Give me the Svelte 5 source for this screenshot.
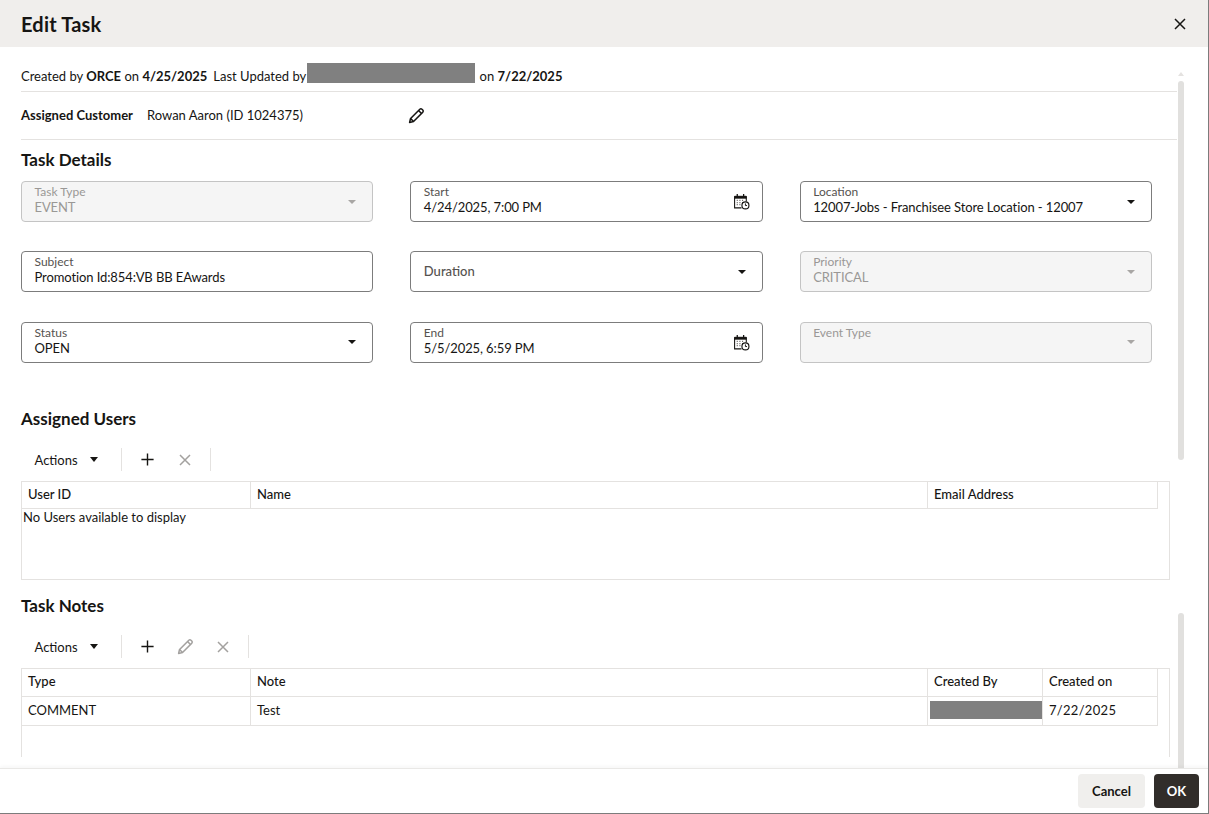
<script>
  const fields = [
    { label: 'Task Type', value: 'EVENT', kind: 'select', disabled: true },
    { label: 'Start', value: '4/24/2025, 7:00\u202fPM', kind: 'date' },
    { label: 'Location', value: '12007-Jobs - Franchisee Store Location - 12007', kind: 'select' },
    { label: 'Subject', value: 'Promotion Id:854:VB BB EAwards', kind: 'text' },
    { label: 'Duration', value: '', kind: 'select' },
    { label: 'Priority', value: 'CRITICAL', kind: 'select', disabled: true },
    { label: 'Status', value: 'OPEN', kind: 'select' },
    { label: 'End', value: '5/5/2025, 6:59\u202fPM', kind: 'date' },
    { label: 'Event Type', value: '', kind: 'select', disabled: true, top: true }
  ]
</script>

{#snippet pencil()}
  <svg class="icon" viewBox="0 0 16 16" fill="none" stroke="currentColor" stroke-width="1.300">
    <path d="M2.200 13.800l.8-3.300L10.800 2.700a1.300 1.300 0 0 1 1.800 0l.7.7a1.300 1.300 0 0 1 0 1.800L5.500 13z" stroke-linejoin="round" />
    <path d="M9.700 3.800l2.500 2.500M3 10.500L5.500 13" />
  </svg>
{/snippet}

{#snippet plus()}
  <svg class="icon" viewBox="0 0 16 16" stroke="currentColor" stroke-width="1.500"><path d="M8 1.500v13M1.500 8h13" /></svg>
{/snippet}

{#snippet cross()}
  <svg class="icon" viewBox="0 0 16 16" stroke="currentColor" stroke-width="1.500"><path d="M3 3l10 10M13 3L3 13" /></svg>
{/snippet}

{#snippet calendar()}
  <svg class="cal" viewBox="0 0 16 16" fill="none" stroke="#161513">
    <path d="M12.500 8V3.500h-11v10.500H8" />
    <path d="M1.500 3h11v2h-11z" fill="#161513" stroke-width="0.600" />
    <path d="M4 1v3M10 1v3" stroke-width="1.200" />
    <path d="M3.500 7h1M6 7h1M8.500 7h1M3.500 9h1M6 9h1M8.500 9h1M3.500 11h1M6 11h1" stroke="#6b6966" stroke-width="1.200" />
    <circle cx="11.700" cy="11.700" r="3.300" fill="#fff" stroke-width="1.100" />
    <path d="M11.700 9.800v2h1.500" stroke-width="0.900" />
  </svg>
{/snippet}

{#snippet toolbar(withEdit)}
  <div class="toolbar">
    <button class="actions">Actions <span class="caret dark"></span></button>
    <span class="sep"></span>
    <span class="tool">{@render plus()}</span>
    {#if withEdit}
      <span class="tool off edit">{@render pencil()}</span>
    {/if}
    <span class="tool off small">{@render cross()}</span>
    <span class="sep"></span>
  </div>
{/snippet}

<div class="dialog">
  <header class="top">
    <h1>Edit Task</h1>
    <span class="close">{@render cross()}</span>
  </header>

  <div class="body">
    <div class="meta">
      Created by <b>ORCE</b> on <b>4/25/2025</b><span class="gap"></span>Last Updated by<span class="mask"></span> on <b>7/22/2025</b>
    </div>
    <div class="customer">
      <span class="cust-label">Assigned Customer</span>
      <span class="cust-name">Rowan Aaron (ID 1024375)</span>
      <span class="cust-edit">{@render pencil()}</span>
    </div>

    <h2 class="details-h">Task Details</h2>
    <div class="form">
      {#each fields as f}
        <div class="field" class:disabled={f.disabled} class:only={!f.value && !f.top}>
          <div class="text">
            <span class="label">{f.label}</span>
            {#if f.value}<span class="value">{f.value}</span>{/if}
          </div>
          {#if f.kind === 'select'}
            <span class="caret" class:dark={!f.disabled}></span>
          {:else if f.kind === 'date'}
            {@render calendar()}
          {/if}
        </div>
      {/each}
    </div>

    <h2 class="users-h">Assigned Users</h2>
    {@render toolbar(false)}
    <div class="table users">
      <div class="row head">
        <div class="c c1">User ID</div>
        <div class="c c2">Name</div>
        <div class="c c3 wide">Email Address</div>
      </div>
      <div class="empty">No Users available to display</div>
    </div>

    <h2 class="notes-h">Task Notes</h2>
    {@render toolbar(true)}
    <div class="table notes">
      <div class="row head">
        <div class="c c1">Type</div>
        <div class="c c2">Note</div>
        <div class="c c3">Created By</div>
        <div class="c c4">Created on</div>
      </div>
      <div class="row">
        <div class="c c1">COMMENT</div>
        <div class="c c2">Test</div>
        <div class="c c3 masked"><span class="mask2"></span></div>
        <div class="c c4 date">7/22/2025</div>
      </div>
    </div>

    <div class="scroll">
      <span class="arrow"></span>
      <span class="thumb one"></span>
      <span class="thumb two"></span>
    </div>
  </div>

  <footer class="bottom">
    <button class="btn cancel">Cancel</button>
    <button class="btn ok">OK</button>
  </footer>
</div>

<style>
  :global(body) {
    margin: 0;
    background: #fff;
  }
  .dialog {
    width: 1209px;
    height: 814px;
    box-sizing: border-box;
    border-right: 1px solid #7c7c7c;
    border-bottom: 1px solid #7c7c7c;
    display: flex;
    flex-direction: column;
    font-family: Lato, 'Noto Sans', sans-serif;
    font-size: 13px;
    color: #161513;
    overflow: hidden;
  }
  .top {
    height: 47px;
    flex: none;
    background: #f0eeec;
    display: flex;
    align-items: center;
    justify-content: space-between;
    padding: 0 21px;
  }
  h1 {
    margin: 0;
    font-size: 20px;
    font-weight: 700;
    letter-spacing: 0.2px;
  }
  .close {
    display: flex;
    width: 16px;
    margin-right: -1px;
  }
  .body {
    flex: 1;
    position: relative;
    overflow: hidden;
    padding: 0 31px 0 21px;
  }
  .meta {
    height: 45px;
    box-sizing: border-box;
    padding-top: 14px;
    display: flex;
    align-items: center;
    white-space: pre-wrap;
    border-bottom: 1px solid #e4e2e0;
  }
  .meta b {
    font-weight: 700;
  }
  .gap {
    width: 6px;
  }
  .mask {
    width: 168px;
    height: 20px;
    background: #808080;
    margin-right: 1px;
    margin-left: 1px;
    margin-bottom: 6px;
  }
  .customer {
    height: 48px;
    box-sizing: border-box;
    display: flex;
    align-items: center;
    border-bottom: 1px solid #e4e2e0;
  }
  .cust-label {
    font-weight: 700;
    width: 126px;
    margin-top: -1px;
  }
  .cust-name {
    width: 261px;
    margin-top: -1px;
  }
  .cust-edit {
    display: flex;
    width: 19px;
    margin-left: -1px;
  }
  h2 {
    margin: 0;
    font-size: 17px;
    font-weight: 700;
    line-height: 20px;
  }
  .details-h {
    margin-top: 10px;
  }
  .form {
    margin-top: 11px;
    width: 1131px;
    display: grid;
    grid-template-columns: repeat(3, 1fr);
    column-gap: 37px;
    row-gap: 29.400px;
  }
  .field {
    height: 41px;
    box-sizing: border-box;
    border: 1px solid #7c7c7c;
    border-radius: 4px;
    display: flex;
    align-items: center;
    justify-content: space-between;
    padding: 0 13px 0 12.500px;
  }
  .text {
    display: flex;
    flex-direction: column;
    align-self: flex-start;
    padding-top: 3px;
  }
  .field.only .text {
    align-self: center;
    padding-top: 0;
  }
  .label {
    font-size: 12px;
    line-height: 14px;
    color: #55524f;
  }
  .only .label {
    font-size: 13px;
    font-weight: 500;
    margin-top: -1px;
  }
  .value {
    line-height: 17px;
    letter-spacing: -0.1px;
  }
  .field.disabled {
    background: #f5f5f5;
    border-color: #c4c4c4;
  }
  .field.disabled .label,
  .field.disabled .value {
    color: #9a9896;
  }
  .caret {
    width: 0;
    height: 0;
    border-left: 4px solid transparent;
    border-right: 4px solid transparent;
    border-top: 4px solid #a8a6a4;
    margin-right: 3px;
  }
  .caret.dark {
    border-top-color: #161513;
  }
  .cal {
    width: 17px;
    height: 17px;
    margin-right: -1px;
  }
  .users-h {
    margin-top: 46px;
  }
  .toolbar {
    margin-top: 19px;
    height: 24px;
    display: flex;
    align-items: center;
  }
  .actions {
    all: unset;
    display: flex;
    align-items: center;
    gap: 12px;
    width: 100px;
    padding-left: 13.500px;
    box-sizing: border-box;
  }
  .actions .caret {
    margin: 0;
    border-left-width: 4.500px;
    border-right-width: 4.500px;
    border-top-width: 5px;
  }
  .sep {
    width: 1px;
    height: 23px;
    background: #e4e2e0;
  }
  .toolbar .tool {
    width: 38px;
    display: flex;
    justify-content: center;
  }
  .toolbar .tool .icon {
    width: 15px;
    height: 15px;
  }
  .toolbar .tool.off {
    color: #a3a19f;
  }
  .toolbar .tool.small .icon {
    width: 16px;
    height: 16px;
  }
  .toolbar .tool.edit .icon {
    width: 19px;
    height: 19px;
  }
  .toolbar .sep:first-of-type {
    margin-right: 6px;
  }
  .toolbar .sep:last-of-type {
    margin: 0 0 0 6px;
  }
  .icon {
    width: 100%;
    height: auto;
    display: block;
  }
  .table {
    width: 1149px;
    margin-top: 9px;
    box-sizing: border-box;
    border: 1px solid #e4e2e0;
  }
  .table.users {
    height: 99px;
  }
  .table.notes {
    height: 89px;
    border-bottom: none;
  }
  .row {
    display: flex;
    height: 29px;
    width: 1136px;
    box-sizing: border-box;
    border-bottom: 1px solid #e4e2e0;
  }
  .row.head {
    height: 27px;
    font-weight: 500;
    border-bottom: 1px solid #e4e2e0;
  }
  .notes .row.head {
    height: 28px;
    border-left: 1px solid #e4e2e0;
    margin-left: -1px;
    width: 1137px;
  }
  .c {
    box-sizing: border-box;
    padding: 0 6px 1px;
    display: flex;
    align-items: center;
    border-right: 1px solid #e4e2e0;
  }
  .head .c {
    padding-bottom: 2px;
  }
  .c1 {
    width: 229px;
  }
  .c2 {
    width: 677px;
  }
  .c3 {
    width: 115px;
  }
  .c3.wide {
    width: 230px;
  }
  .c4 {
    width: 115px;
  }
  .date {
    letter-spacing: 0.3px;
  }
  .masked {
    padding: 4px 0 0 2px;
    align-items: flex-start;
  }
  .mask2 {
    width: 112px;
    height: 18px;
    background: #808080;
  }
  .empty {
    padding-left: 1px;
    line-height: 18px;
    margin-top: -1px;
  }
  .notes-h {
    margin-top: 16px;
  }
  .scroll {
    position: absolute;
    top: 0;
    bottom: 0;
    left: 1178px;
    width: 6px;
  }
  .arrow {
    position: absolute;
    top: 25px;
    left: 0;
    width: 0;
    height: 0;
    border-left: 3px solid transparent;
    border-right: 3px solid transparent;
    border-bottom: 4px solid #e4e2e0;
  }
  .thumb {
    position: absolute;
    left: 0;
    width: 6px;
    background: #e1e0de;
    border-radius: 3px 3px 0 0;
  }
  .thumb.one {
    top: 34px;
    height: 379px;
    border-radius: 3px;
  }
  .thumb.two {
    top: 566px;
    bottom: 0;
  }
  .bottom {
    height: 45px;
    flex: none;
    box-sizing: border-box;
    border-top: 1px solid #e9e8e6;
    box-shadow: 0 -2px 3px rgba(0, 0, 0, 0.03);
    position: relative;
    background: #fff;
    display: flex;
    justify-content: flex-end;
    gap: 9px;
    padding: 5px 9px 0 0;
  }
  .btn {
    all: unset;
    height: 34px;
    border-radius: 4px;
    text-align: center;
    font-weight: 700;
    font-family: Lato, 'Noto Sans', sans-serif;
    font-size: 13px;
  }
  .cancel {
    width: 67px;
    background: #f0efed;
  }
  .ok {
    width: 45px;
    background: #312d2a;
    color: #fff;
  }
</style>
